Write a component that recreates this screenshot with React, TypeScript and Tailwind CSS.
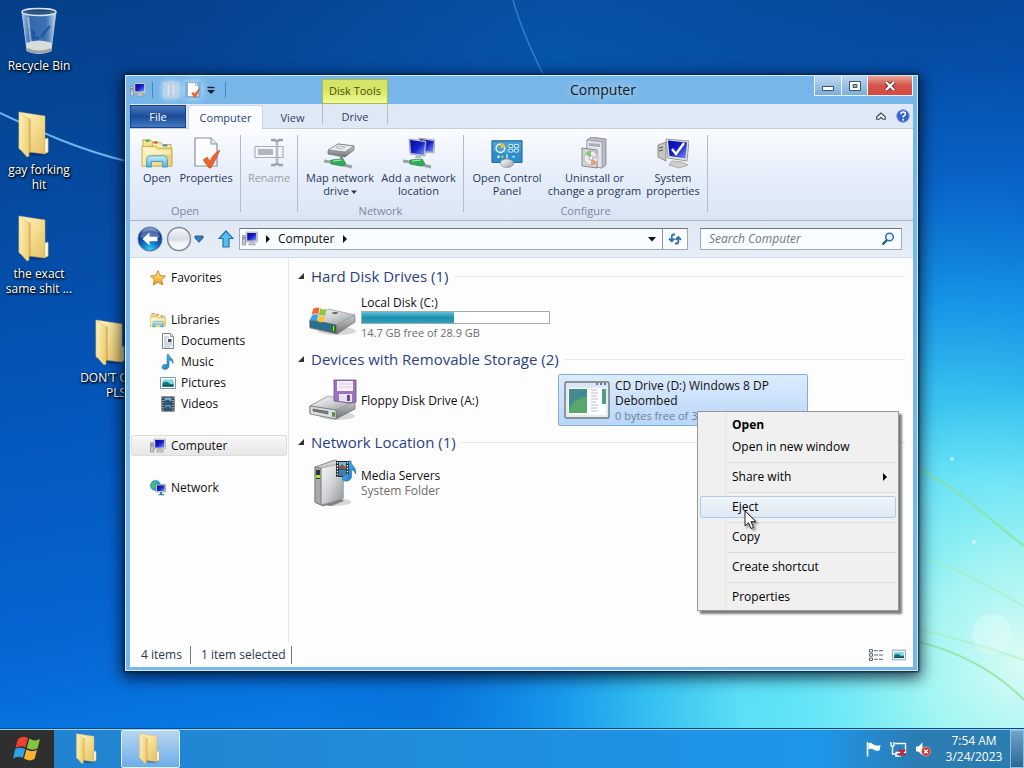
import { useState } from 'react';
import type { ReactNode } from 'react';

interface IconProps { className?: string; }

// Gradients shared by all the icons below.
function Gradients() {
  return (
    <svg className="absolute h-0 w-0" aria-hidden="true">
      <defs>
        <linearGradient id="folderBack" x1="0" y1="0" x2="1" y2="1">
          <stop offset="0" stopColor="#fdf6cf" /><stop offset="0.5" stopColor="#f3dc8c" /><stop offset="1" stopColor="#e3bd62" />
        </linearGradient>
        <linearGradient id="folderFront" x1="0" y1="0" x2="1" y2="0.4">
          <stop offset="0" stopColor="#fdf3c0" /><stop offset="1" stopColor="#f0d27a" />
        </linearGradient>
        <linearGradient id="screen" x1="0" y1="0" x2="1" y2="1">
          <stop offset="0" stopColor="#0505a8" /><stop offset="0.5" stopColor="#1620c8" /><stop offset="1" stopColor="#7f9cf5" />
        </linearGradient>
        <linearGradient id="metal" x1="0" y1="0" x2="1" y2="1">
          <stop offset="0" stopColor="#fafafa" /><stop offset="0.5" stopColor="#d0d2d4" /><stop offset="1" stopColor="#8f9294" />
        </linearGradient>
        <linearGradient id="metalSide" x1="0" y1="0" x2="0" y2="1">
          <stop offset="0" stopColor="#d9dadb" /><stop offset="1" stopColor="#6e7173" />
        </linearGradient>
        <linearGradient id="aqua" x1="0" y1="0" x2="0" y2="1">
          <stop offset="0" stopColor="#c5f0fb" /><stop offset="1" stopColor="#4fb4de" />
        </linearGradient>
        <linearGradient id="note" x1="0" y1="0" x2="1" y2="1">
          <stop offset="0" stopColor="#69cdf5" /><stop offset="1" stopColor="#0a66bb" />
        </linearGradient>
        <radialGradient id="orb" cx="0.5" cy="0.95" r="0.95">
          <stop offset="0" stopColor="#35d3f5" /><stop offset="0.45" stopColor="#0f62bd" /><stop offset="0.8" stopColor="#0b2f86" /><stop offset="1" stopColor="#a9c6ec" />
        </radialGradient>
        <linearGradient id="orbOff" x1="0" y1="0" x2="0" y2="1">
          <stop offset="0" stopColor="#f7f8fb" /><stop offset="0.5" stopColor="#d9dde6" /><stop offset="1" stopColor="#f4f6fa" />
        </linearGradient>
        <linearGradient id="glass" x1="0" y1="0" x2="1" y2="0">
          <stop offset="0" stopColor="#d5e5f5" stopOpacity="0.85" /><stop offset="0.25" stopColor="#4f83c0" stopOpacity="0.6" />
          <stop offset="0.7" stopColor="#5f92cc" stopOpacity="0.6" /><stop offset="1" stopColor="#e5f0fa" stopOpacity="0.9" />
        </linearGradient>
        <linearGradient id="star" x1="0" y1="0" x2="0" y2="1">
          <stop offset="0" stopColor="#fff09a" /><stop offset="1" stopColor="#f49a1c" />
        </linearGradient>
      </defs>
    </svg>
  );
}

function Wallpaper() {
  return (
    <svg className="absolute inset-0 h-full w-full" viewBox="0 0 1024 768" preserveAspectRatio="none" aria-hidden="true">
      <defs>
        <linearGradient id="wpBase" x1="0" y1="0" x2="0.25" y2="1">
          <stop offset="0" stopColor="#053f88" /><stop offset="0.45" stopColor="#0553b4" /><stop offset="0.8" stopColor="#0566d4" /><stop offset="1" stopColor="#0a80ea" />
        </linearGradient>
        <radialGradient id="wpGlow" gradientUnits="userSpaceOnUse" cx="950" cy="690" r="650">
          <stop offset="0" stopColor="#66eef8" /><stop offset="0.32" stopColor="#5cdff6" /><stop offset="0.46" stopColor="#38c4f1" stopOpacity="0.95" />
          <stop offset="0.6" stopColor="#1a9eed" stopOpacity="0.85" /><stop offset="0.8" stopColor="#0a70d4" stopOpacity="0.5" /><stop offset="1" stopColor="#0a64c8" stopOpacity="0" />
        </radialGradient>
        <radialGradient id="wpWhite" gradientUnits="userSpaceOnUse" cx="1030" cy="660" r="270">
          <stop offset="0" stopColor="#eefdf5" stopOpacity="0.9" /><stop offset="0.4" stopColor="#c2fbf0" stopOpacity="0.65" /><stop offset="1" stopColor="#6fe6f8" stopOpacity="0" />
        </radialGradient>
        <radialGradient id="wpTop" gradientUnits="userSpaceOnUse" cx="560" cy="60" r="380">
          <stop offset="0" stopColor="#0a66c4" stopOpacity="0.4" /><stop offset="1" stopColor="#0a66c4" stopOpacity="0" />
        </radialGradient>
      </defs>
      <rect width="1024" height="768" fill="url(#wpBase)" />
      <rect width="1024" height="768" fill="url(#wpTop)" />
      <rect width="1024" height="768" fill="url(#wpGlow)" />
      <rect width="1024" height="768" fill="url(#wpWhite)" />
      <path d="M0 113C40 132 80 150 126 161" fill="none" stroke="#6db5ee" strokeWidth="2" />
      <path d="M513 0C520 25 532 52 544 76" fill="none" stroke="#3f93d6" strokeOpacity="0.7" strokeWidth="1.5" />
      <path d="M918 469C955 485 990 520 1024 546M910 640C960 650 1000 675 1024 700" fill="none" stroke="#8be08c" strokeOpacity="0.7" strokeWidth="2" />
      <path d="M930 560C965 572 995 590 1024 606M915 628C955 638 990 648 1024 660" fill="none" stroke="#a6ecae" strokeOpacity="0.5" strokeWidth="2" />
      <circle cx="992" cy="634" r="20" fill="#fff" fillOpacity="0.25" />
      <circle cx="952" cy="459" r="2" fill="#d9f6ff" fillOpacity="0.7" /><circle cx="974" cy="542" r="2" fill="#e9fbff" fillOpacity="0.7" />
    </svg>
  );
}

function FolderIcon({ className }: IconProps) {
  return (
    <svg viewBox="0 0 32 48" className={className} aria-hidden="true">
      <ellipse cx="20" cy="42" rx="11" ry="3" fill="#000" fillOpacity="0.25" />
      <path d="M2 1L28 5V40L30 41V29L31 28V41L28 43L12 41L2 38Z" fill="url(#folderBack)" stroke="#d3b060" strokeWidth="0.5" />
      <path d="M28 28L31 27V41L28 42Z" fill="#fffbe6" stroke="#cbb878" strokeWidth="0.5" />
      <path d="M2 1L12 8V45L10 46L2 37Z" fill="url(#folderFront)" stroke="#d3b060" strokeWidth="0.5" />
      <path d="M12 8L14 7V41L12 42Z" fill="#c99b3e" fillOpacity="0.5" />
    </svg>
  );
}

function RecycleBinIcon({ className }: IconProps) {
  return (
    <svg viewBox="0 0 40 48" className={className} aria-hidden="true">
      <path d="M3 5L8 44Q20 49 32 44L37 5Z" fill="url(#glass)" stroke="#b9cfe6" strokeWidth="0.8" />
      <path d="M7 36Q20 31 33 36L32 44Q20 49 8 44Z" fill="#e9e8df" fillOpacity="0.9" />
      <path d="M8 41Q20 46 32 41L32 44Q20 49 8 44Z" fill="#8d9499" fillOpacity="0.8" />
      <ellipse cx="20" cy="5" rx="17" ry="3.5" fill="#23476f" fillOpacity="0.75" stroke="#d9e3ee" strokeWidth="1.4" />
      <path d="M10 22L15 26L13 31H20M22 30L31 19M11 27L15 32" stroke="#1551a8" strokeWidth="2.5" fill="none" strokeOpacity="0.8" />
      <path d="M9 10L12 36" stroke="#fff" strokeWidth="2" strokeOpacity="0.45" />
    </svg>
  );
}

function ComputerIcon({ className }: IconProps) {
  return (
    <svg viewBox="0 0 16 16" className={className} aria-hidden="true">
      <path d="M0.5 4.5H3.5V14H0.5Z" fill="#c9ccd2" stroke="#80858f" strokeWidth="0.7" />
      <path d="M1 6.5H3M1 8H3" stroke="#555" strokeWidth="0.6" />
      <path d="M4 1H15.5V11H4Z" fill="#e3e2dc" stroke="#9a9a9a" strokeWidth="0.6" />
      <path d="M5.2 2H14.3V9.6H5.2Z" fill="url(#screen)" />
      <path d="M8 11H12L13.5 14H6.5Z" fill="#c9c9c9" stroke="#888" strokeWidth="0.5" />
    </svg>
  );
}

function SheetCheckIcon({ className }: IconProps) {
  return (
    <svg viewBox="0 0 32 32" className={className} aria-hidden="true">
      <path d="M5 1H21L27 7V29H5Z" fill="#fcfdff" stroke="#8b919b" strokeWidth="1.2" />
      <path d="M21 1V7H27" fill="#e4e8ee" stroke="#8b919b" strokeWidth="1" />
      <path d="M13 23L17 20L20 24C22 19 25 16 30 13C27 20 24 26 21 31H19Z" fill="#ea6435" stroke="#c84d20" strokeWidth="0.6" />
    </svg>
  );
}

function LibraryIcon({ className }: IconProps) {
  return (
    <svg viewBox="0 0 34 32" className={className} aria-hidden="true">
      <path d="M2 2H10L12 4H18V10H2Z" fill="#f6e291" stroke="#b89840" strokeWidth="0.8" />
      <path d="M5 2H9V4H5Z" fill="#34a853" />
      <path d="M12 5H21L23 7H32V13H12Z" fill="#f9eaa5" stroke="#b89840" strokeWidth="0.8" />
      <path d="M14 4H17V6H14Z" fill="#d9453a" /><path d="M23 7H28V9H23Z" fill="#3b8edb" />
      <path d="M1 9H16L18 11H33V30H1Z" fill="url(#folderFront)" stroke="#c29f3f" strokeWidth="0.9" />
      <path d="M3 11H14L16 13H31V17H3Z" fill="#fff9d9" fillOpacity="0.6" />
      <path d="M6 31V23Q6 19 10 19H24Q28 19 28 23V31H23V25H11V31Z" fill="url(#aqua)" stroke="#3c93bd" strokeWidth="0.9" />
    </svg>
  );
}

function RenameIcon({ className }: IconProps) {
  return (
    <svg viewBox="0 0 32 32" className={className} aria-hidden="true">
      <path d="M2 9.5H30V20.5H2Z" fill="#f3f5f9" stroke="#a9aeb9" strokeWidth="1.2" />
      <path d="M5 12H20V18H5Z" fill="#aeb6c6" />
      <path d="M18 3H22L24 5L26 3H30M24 5V26M18 28H22L24 26L26 28H30" fill="none" stroke="#9ba2ae" strokeWidth="2.4" />
      <path d="M24 5V26" stroke="#dfe3ea" strokeWidth="0.8" />
    </svg>
  );
}

function Cable() {
  return (
    <g>
      <path d="M0 24L7 25L28 30" stroke="#9aa2a8" strokeWidth="3" fill="none" />
      <path d="M7 23L19 22L22 27L18 29L7 27Z" fill="#2fae57" stroke="#17793a" strokeWidth="0.6" />
      <path d="M9 24L18 23" stroke="#a6edba" strokeWidth="1" />
    </g>
  );
}

function MapDriveIcon({ className }: IconProps) {
  return (
    <svg viewBox="0 0 32 32" className={className} aria-hidden="true">
      <path d="M4 14L14 7L30 9V13L21 20L4 17Z" fill="url(#metalSide)" stroke="#696c6e" strokeWidth="0.7" />
      <path d="M4 13L14 7L30 9L21 15Z" fill="#e9eaeb" stroke="#777" strokeWidth="0.7" />
      <path d="M12 10.500L16 9L21 10L17 12Z" fill="none" stroke="#999" strokeWidth="0.6" />
      <path d="M17 19L18 23" stroke="#888" strokeWidth="3" />
      <Cable />
    </svg>
  );
}

function AddNetworkIcon({ className }: IconProps) {
  return (
    <svg viewBox="0 0 32 32" className={className} aria-hidden="true">
      <path d="M16 1L32 3L31 16L17 15Z" fill="#e0e2e8" stroke="#8e9199" strokeWidth="0.7" />
      <path d="M17 2L31 4L30 15L18 14Z" fill="url(#screen)" />
      <path d="M6 2L23 4L22 19L7 17Z" fill="#dadce3" stroke="#8e9199" strokeWidth="0.7" />
      <path d="M7 3L22 5L21 18L8 16Z" fill="url(#screen)" />
      <path d="M13 18L18 19V21H12Z" fill="#b5b8bd" />
      <Cable />
    </svg>
  );
}

function ControlPanelIcon({ className }: IconProps) {
  return (
    <svg viewBox="0 0 34 32" className={className} aria-hidden="true">
      <path d="M1 3H33V26H1Z" fill="#2c8fcb" stroke="#1a5f91" strokeWidth="1" />
      <path d="M2 4H32V13Q16 18 2 14Z" fill="#63b6e4" fillOpacity="0.5" />
      <circle cx="10" cy="11" r="4.5" fill="none" stroke="#fff" strokeWidth="1.4" />
      <path d="M10 11V5A5.5 5.5 0 0 1 15 10Z" fill="#f6bb35" />
      <path d="M19 7H23V10H19ZM25 7H29V10H25ZM19 12H23V15H19ZM25 12H29V15H25Z" fill="#2a78ad" stroke="#d7effc" strokeWidth="1" />
      <circle cx="8" cy="20" r="1.3" fill="#fff" /><circle cx="12" cy="20" r="1.3" fill="#f6bb35" /><circle cx="24" cy="20" r="1.3" fill="#a6dcf7" />
      <ellipse cx="17" cy="27" rx="7" ry="4.5" fill="url(#metal)" stroke="#888" strokeWidth="0.6" />
      <path d="M17 22V17" stroke="#c7e2f2" strokeWidth="1.5" />
    </svg>
  );
}

function UninstallIcon({ className }: IconProps) {
  return (
    <svg viewBox="0 0 32 32" className={className} aria-hidden="true">
      <path d="M8 3L12 0L27 2V28L23 31L8 28Z" fill="#b9bac6" stroke="#787a86" strokeWidth="0.7" />
      <path d="M8 3L23 5V31L8 28Z" fill="#e3e3ea" stroke="#85879a" strokeWidth="0.6" />
      <path d="M10 6L21 7V10L10 9Z" fill="#a9abc2" />
      <path d="M3 11L18 13V31L3 29Z" fill="#d5d6d4" stroke="#707270" strokeWidth="0.8" />
      <circle cx="12" cy="21" r="7" fill="#e9eef0" stroke="#9aa5a5" strokeWidth="0.7" />
      <path d="M12 21L6 17A7 7 0 0 1 12 14Z" fill="#86c97b" /><path d="M12 21L18 25A7 7 0 0 1 12 28Z" fill="#e8a16d" /><path d="M12 21L18 17L19 22Z" fill="#d5c2ec" />
      <circle cx="12" cy="21" r="2" fill="#fff" stroke="#888" strokeWidth="0.6" />
    </svg>
  );
}

function SystemIcon({ className }: IconProps) {
  return (
    <svg viewBox="0 0 32 32" className={className} aria-hidden="true">
      <path d="M1 8L9 5V24L1 20Z" fill="#c5c6c0" stroke="#7b7c76" strokeWidth="0.8" />
      <path d="M2 11L6 10M2 14L6 13" stroke="#545450" strokeWidth="1" />
      <path d="M9 2L32 4L30 24L11 21Z" fill="#e5e5e0" stroke="#86867f" strokeWidth="0.8" />
      <path d="M11 3.5L30 5.5L28.5 21.5L12.5 19Z" fill="url(#screen)" />
      <path d="M15 24L25 25L31 28L22 31L12 28Z" fill="#cfcfcb" stroke="#8b8b86" strokeWidth="0.6" />
      <path d="M15 12L19 17L27 6" fill="none" stroke="#fff" strokeWidth="2.4" />
    </svg>
  );
}

function StarIcon({ className }: IconProps) {
  return (
    <svg viewBox="0 0 16 16" className={className} aria-hidden="true">
      <path d="M8 0.7L10.2 5.6L15.5 6.1L11.5 9.6L12.7 14.9L8 12.1L3.3 14.9L4.5 9.6L0.5 6.1L5.8 5.6Z" fill="url(#star)" stroke="#c9761b" strokeWidth="0.9" />
    </svg>
  );
}

function DocumentIcon({ className }: IconProps) {
  return (
    <svg viewBox="0 0 16 16" className={className} aria-hidden="true">
      <path d="M2.5 0.5H10.5L13.5 3.5V15.5H2.5Z" fill="#fdfdfd" stroke="#7c828a" />
      <path d="M10.5 0.5V3.5H13.5" fill="none" stroke="#7c828a" strokeWidth="0.8" />
      <path d="M4 4H9M4 6H7M4 8H7M4 10H12M4 12H12M4 14H10" stroke="#8fa0b3" strokeWidth="0.8" />
      <path d="M8 6H11.500V9H8Z" fill="#41566e" />
    </svg>
  );
}

function MusicIcon({ className }: IconProps) {
  return (
    <svg viewBox="0 0 16 16" className={className} aria-hidden="true">
      <path d="M7 0.5H9C9 3.5 14 4.5 13 9.5C12.6 7 10.5 6.2 9 6V12C9 14.5 6.5 15.6 4.4 15.4C2.2 15.2 1.2 13.5 2.4 11.8C3.4 10.4 5.5 10 7 10.7Z" fill="url(#note)" stroke="#1b6fae" strokeWidth="0.5" />
    </svg>
  );
}

function PictureIcon({ className }: IconProps) {
  return (
    <svg viewBox="0 0 16 16" className={className} aria-hidden="true">
      <path d="M0.5 2.5H15.5V13.5H0.5Z" fill="#fdfefe" stroke="#7998b4" />
      <path d="M2.5 4.5H13.5V11.5H2.5Z" fill="#7fd6e6" />
      <path d="M2.5 8Q6 5.5 9 8T13.5 8V11.5H2.5Z" fill="#17786f" />
      <path d="M2.5 10H13.5V11.5H2.5Z" fill="#0f4b63" />
    </svg>
  );
}

function VideoIcon({ className }: IconProps) {
  return (
    <svg viewBox="0 0 16 16" className={className} aria-hidden="true">
      <path d="M1.5 0.5H14.5V15.5H1.5Z" fill="#23282e" />
      <path d="M4.5 1.5H11.5V7.3H4.5Z" fill="#6fb6df" /><path d="M4.5 8.5H11.5V14.5H4.5Z" fill="#4c92c7" />
      <path d="M4.5 5L8 3.5L11.5 6V7.3H4.5Z" fill="#2d5470" /><path d="M4.5 12L8 10.5L11.5 13V14.5H4.5Z" fill="#2d5470" />
      <path d="M3 1.5V15M13 1.5V15" stroke="#f4f4f4" strokeWidth="1.2" strokeDasharray="1.3 1.1" />
    </svg>
  );
}

function NetworkIcon({ className }: IconProps) {
  return (
    <svg viewBox="0 0 16 16" className={className} aria-hidden="true">
      <circle cx="5.5" cy="5.5" r="5" fill="#2b9ed8" stroke="#186b9b" strokeWidth="0.5" />
      <path d="M2 3Q4 0.8 6.5 1.5L5 4L6 6L3.5 9Q1 7 1 5Z" fill="#3fbf69" />
      <path d="M6 4.5H15.5V12H6Z" fill="#d6dbe4" stroke="#737a86" strokeWidth="0.5" />
      <path d="M7 5.4H14.6V11H7Z" fill="url(#screen)" />
      <path d="M10 12H12V14H14V15.2H8.5V14H10Z" fill="#3f7cb8" />
    </svg>
  );
}

function WindowsFlag({ className }: IconProps) {
  return (
    <svg viewBox="0 0 28 26" className={className} aria-hidden="true">
      <path d="M5 3Q10 -1 15 2L12.5 11.5Q8 9 2.5 12Z" fill="#ef4030" />
      <path d="M16.3 2.6Q21 6 27 3L24.5 12.5Q19 15 13.8 12Z" fill="#85c43c" />
      <path d="M2.2 13.3Q7 10.5 12.2 13L9.8 22Q5 19.5 0 22.5Z" fill="#2ba3e6" />
      <path d="M13.4 13.6Q18.5 16.5 24 14L21.5 23Q16 26 11 22.6Z" fill="#fbb52c" />
    </svg>
  );
}

function HardDiskIcon({ className }: IconProps) {
  return (
    <svg viewBox="0 0 48 40" className={className} aria-hidden="true">
      <ellipse cx="28" cy="34" rx="19" ry="4" fill="#000" fillOpacity="0.15" />
      <path d="M1 23L18 15L46 19V25L28 37L1 31Z" fill="url(#metalSide)" stroke="#6f7375" strokeWidth="0.7" />
      <path d="M1 22L20 12L46 18L27 28Z" fill="url(#metal)" stroke="#919496" strokeWidth="0.7" />
      <path d="M1 23L27 28V36L1 30Z" fill="#27708f" stroke="#48606b" strokeWidth="0.7" />
      <path d="M22 28L27 29V35L22 34Z" fill="#2e6b2c" /><path d="M24.500 29V34" stroke="#a8e04b" strokeWidth="1.2" />
      <ellipse cx="26" cy="16" rx="3" ry="1.1" fill="#444" fillOpacity="0.8" />
      <path d="M4 12Q7 9.500 10.500 11L9.300 17Q6 15.500 2.800 17.600Z" fill="#ee6a34" />
      <path d="M11.200 11.300Q14 13.500 17.500 12L16.200 18Q12.500 19.500 10 17.300Z" fill="#8dc63f" />
      <path d="M2.600 18.500Q6 16.300 9.100 17.900L7.800 24Q4.800 22.300 1.400 24.300Z" fill="#3ba3e0" />
      <path d="M9.800 18.200Q12.500 20.200 16 18.800L14.700 24.800Q11.500 26 8.600 24.200Z" fill="#fcc62f" />
    </svg>
  );
}

function FloppyDriveIcon({ className }: IconProps) {
  return (
    <svg viewBox="0 0 48 44" className={className} aria-hidden="true">
      <ellipse cx="28" cy="38" rx="18" ry="4" fill="#000" fillOpacity="0.15" />
      <path d="M1 28L18 19L46 23V31L27 41L1 35Z" fill="url(#metalSide)" stroke="#6f7375" strokeWidth="0.8" />
      <path d="M1 28L19 18L46 23L27 32Z" fill="url(#metal)" stroke="#919496" strokeWidth="0.7" />
      <path d="M1 28L27 32V41L1 36Z" fill="#dcdedf" stroke="#707476" strokeWidth="0.8" />
      <path d="M4 31L19 33.500V36L4 33Z" fill="#777c7f" stroke="#4a4e50" strokeWidth="0.6" />
      <path d="M23 34L26 34.600V39L23 38.400Z" fill="#5a8f32" />
      <path d="M25 2H47V24L42 25L25 23Z" fill="#9b76bd" stroke="#6d4794" strokeWidth="0.8" />
      <path d="M28 3H44V13H28Z" fill="#f5f1f9" /><path d="M30 6H42M30 9H42" stroke="#cfc2dc" strokeWidth="0.8" />
      <path d="M30 16H43V24H38L30 23Z" fill="#e9e3ef" /><path d="M38 17H41V23H38Z" fill="#6d4794" />
    </svg>
  );
}

function CdDriveIcon({ className }: IconProps) {
  return (
    <svg viewBox="0 0 46 40" className={className} aria-hidden="true">
      <rect x="1" y="2" width="44" height="36" rx="1.500" fill="#e7eaec" stroke="#6c7780" strokeWidth="1.400" />
      <path d="M2 3H44V7H2Z" fill="#d7e6f3" />
      <path d="M32 4H34M36 4H38M40 4H42" stroke="#3a5875" strokeWidth="1.600" />
      <path d="M4 8H42V35H4Z" fill="#fdfefe" />
      <path d="M5 9H23V33H5Z" fill="#468b8e" />
      <path d="M5 33V25Q12 15 23 16V33Z" fill="#57a96b" /><path d="M5 22Q13 10 23 10V17Q12 18 5 29Z" fill="#3f8798" fillOpacity="0.6" />
      <path d="M27 10H33M27 13H34M27 16H33M27 19H34M27 22H32M27 25H34M27 28H33M27 31H34" stroke="#b9c0c6" strokeWidth="1" />
      <path d="M38 9H42V24H38Z" fill="#4f9b86" />
    </svg>
  );
}

function MediaServerIcon({ className }: IconProps) {
  return (
    <svg viewBox="0 0 48 48" className={className} aria-hidden="true">
      <ellipse cx="24" cy="43" rx="18" ry="4" fill="#000" fillOpacity="0.15" />
      <path d="M6 8L26 1L34 5V39L14 47L6 43Z" fill="url(#metalSide)" stroke="#6f7375" strokeWidth="0.8" />
      <path d="M12 9L34 4V40L12 46Z" fill="url(#metal)" stroke="#9a9d9f" strokeWidth="0.8" />
      <path d="M6 8L12 9V46L6 43Z" fill="#a7aaac" stroke="#66696b" strokeWidth="0.600" />
      <path d="M7 11H11V20H7Z" fill="#2f3332" /><path d="M7 16H11V19H7Z" fill="#b2e035" />
      <path d="M16 46L32 40L35 42L22 47Z" fill="#7c8082" />
      <path d="M27 2H40V18H27Z" fill="#22282e" /><path d="M30 3H37V9.500H30Z" fill="#6fb6df" /><path d="M30 10.500H37V17H30Z" fill="#3f7fb0" />
      <path d="M30 8L33 5L37 8.500V9.500H30Z" fill="#9a4f30" />
      <path d="M28.500 3V18M38.500 3V18" stroke="#f4f4f4" strokeWidth="1.400" strokeDasharray="1.500 1.400" />
      <path d="M40 2H42C42 7 48 8 46.500 15C45.500 11.500 44 11 42.500 11V17C42.500 21 39 22.500 36 22C33 21.500 32.500 18 35 16.500C37 15.300 39 15.500 40 16Z" fill="url(#note)" stroke="#1b6fae" strokeWidth="0.600" />
    </svg>
  );
}

function Caret({ className }: IconProps) {
  return <svg viewBox="0 0 8 8" className={className} aria-hidden="true"><path d="M0 2H8L4 6.500Z" fill="currentColor" /></svg>;
}

function Arrow({ className }: IconProps) {
  return <svg viewBox="0 0 8 8" className={className} aria-hidden="true"><path d="M2 0L6 4L2 8Z" fill="currentColor" /></svg>;
}

interface DesktopItemProps { label: string; icon: ReactNode; place: string; }

function DesktopItem({ label, icon, place }: DesktopItemProps) {
  return (
    <button className={`absolute flex w-[74px] flex-col items-center gap-[3px] text-center text-xs leading-[15px] text-white [text-shadow:1px_1px_2px_#000,0_1px_3px_#000] ${place}`}>
      {icon}
      <span>{label}</span>
    </button>
  );
}

interface RibbonButtonProps { label: ReactNode; icon: ReactNode; width: string; disabled?: boolean; }

function RibbonButton({ label, icon, width, disabled }: RibbonButtonProps) {
  return (
    <button disabled={disabled} className={`flex shrink-0 flex-col items-center gap-0.5 text-center leading-[13px] whitespace-nowrap ${width} ${disabled ? 'text-[#9a9ea8]' : 'text-[#26395c]'}`}>
      {icon}
      <span>{label}</span>
    </button>
  );
}

function RibbonGroup({ name, className, children }: { name?: string; className: string; children: ReactNode }) {
  return (
    <div className="flex shrink-0">
      <div className={`flex flex-col justify-between ${className}`}>
        <div className="flex pt-0.5">{children}</div>
        <div className="h-4 text-center leading-4 text-[#7c879b]">{name}</div>
      </div>
      <span className="h-[77px] w-px bg-[#b3bccb]" />
    </div>
  );
}

function Ribbon() {
  const size = 'h-8 w-8';
  return (
    <div className="flex h-[92px] shrink-0 items-stretch border-b border-[#a9b4c4] bg-linear-to-b from-[#fafcff] via-[#e7eefa] to-[#dae5f4] pt-1.5 pb-px text-[11px]">
      <RibbonGroup name="Open" className="px-1.5">
        <RibbonButton width="w-[42px]" label="Open" icon={<LibraryIcon className={size} />} />
        <RibbonButton width="w-14" label="Properties" icon={<SheetCheckIcon className={size} />} />
      </RibbonGroup>
      <RibbonGroup className="px-0.5">
        <RibbonButton width="w-[52px]" label="Rename" disabled icon={<RenameIcon className={size} />} />
      </RibbonGroup>
      <RibbonGroup name="Network" className="px-1">
        <RibbonButton width="w-[76px]" icon={<MapDriveIcon className={size} />}
          label={<>Map network<br />drive<Caret className="ml-0.5 inline h-1.5 w-1.5" /></>} />
        <RibbonButton width="w-[81px]" label={<>Add a network<br />location</>} icon={<AddNetworkIcon className={size} />} />
      </RibbonGroup>
      <RibbonGroup name="Configure" className="px-1">
        <RibbonButton width="w-[78px]" label={<>Open Control<br />Panel</>} icon={<ControlPanelIcon className={size} />} />
        <RibbonButton width="w-[97px]" label={<>Uninstall or<br />change a program</>} icon={<UninstallIcon className={size} />} />
        <RibbonButton width="w-[60px]" label={<>System<br />properties</>} icon={<SystemIcon className={size} />} />
      </RibbonGroup>
    </div>
  );
}

function TitleBar() {
  return (
    <div className="flex h-7 shrink-0 text-[11px]">
      <div className="flex w-48 shrink-0 items-center">
        <ComputerIcon className="h-4 w-4" />
        <span className="ml-1.5 h-4 w-px bg-[#4d87ba]" />
        <button aria-label="New folder" className="ml-2.5 h-4 w-4 bg-[#b7d4ea] shadow-[0_0_6px_#d7ebfa]">
          <svg viewBox="0 0 16 16" aria-hidden="true"><path d="M4 2H7V14H4ZM9 2H12V14H9Z" fill="#dde6ee" stroke="#b9cddd" /></svg>
        </button>
        <button aria-label="Properties" className="ml-1.5 shadow-[0_0_8px_#d7ebfa]"><SheetCheckIcon className="h-4 w-4" /></button>
        <button aria-label="Customize Quick Access Toolbar" className="ml-1.5">
          <svg viewBox="0 0 8 10" className="h-2.5 w-2" aria-hidden="true"><path d="M0.500 2.500H7.500" stroke="#16202c" strokeWidth="1.400" /><path d="M0 5H8L4 9Z" fill="#16202c" /></svg>
        </button>
        <span className="ml-2.5 h-4 w-px bg-[#4d87ba]" />
      </div>
      <div className="mt-[3px] flex w-[66px] shrink-0 items-center justify-center border border-[#a9bd4a] bg-linear-to-b from-[#d4e268] via-[#dbe75f] to-[#f4fa9e] whitespace-nowrap text-[#454f22]">Disk Tools</div>
      <h1 className="flex-1 pl-1 text-center text-sm leading-7 text-[#101820] [text-shadow:0_0_8px_#e6f4ff]">Computer</h1>
      <div className="flex h-5 shrink-0 border border-t-0 border-[#eaf5fd]">
        <button aria-label="Minimize" className="flex w-[27px] items-center justify-center border-r border-[#eaf5fd] bg-linear-to-b from-[#bcd9ef] to-[#79addb]">
          <svg viewBox="0 0 12 5" className="mt-1.5 h-[5px] w-3" aria-hidden="true"><path d="M0.500 0.500H11.500V4.500H0.500Z" fill="#fff" stroke="#3f5365" /></svg>
        </button>
        <button aria-label="Maximize" className="flex w-[26px] items-center justify-center border-r border-[#eaf5fd] bg-linear-to-b from-[#bcd9ef] to-[#79addb]">
          <svg viewBox="0 0 12 10" className="h-2.5 w-3" aria-hidden="true"><path d="M0.500 0.500H11.500V9.500H0.500Z" fill="#fff" stroke="#3f5365" /><path d="M4 3.500H8V6.500H4Z" fill="#8fb9dc" stroke="#3f5365" /></svg>
        </button>
        <button aria-label="Close" className="flex w-11 items-center justify-center bg-linear-to-b from-[#e8a399] via-[#d3544a] to-[#d9473d]">
          <svg viewBox="0 0 12 10" className="h-2.5 w-3" aria-hidden="true"><path d="M2 1L10 9M10 1L2 9" stroke="#5b3030" strokeWidth="4" /><path d="M2 1L10 9M10 1L2 9" stroke="#fff" strokeWidth="2.400" /></svg>
        </button>
      </div>
    </div>
  );
}

function TabRow() {
  return (
    <div className="flex h-[25px] shrink-0 items-end border-b border-[#c3cedd] bg-[#dfe8f5] text-[11px] text-[#33415e]">
      <button className="h-[23px] w-14 border border-[#1d3f83] bg-linear-to-b from-[#4a79bf] via-[#1d4a97] to-[#3f7cc6] pt-0.5 text-white">File</button>
      <button className="-mb-px ml-0.5 h-6 w-[75px] rounded-t-sm border border-b-0 border-[#cad5e3] bg-[#fafcff] pt-0.5 text-[#27447f]">Computer</button>
      <button className="h-6 w-[59px] pt-1">View</button>
      <button className="mb-1 h-5 w-[66px] border-x border-[#b5c2a8] pt-1.5">Drive</button>
      <div className="ml-auto flex h-6 items-center gap-2.5 pr-[3px]">
        <button aria-label="Minimize the Ribbon">
          <svg viewBox="0 0 10 8" className="h-2 w-2.5" aria-hidden="true"><path d="M0.700 5L5 1L9.300 5V7.300H7L5 5.300L3 7.300H0.700Z" fill="#fff" stroke="#333f50" strokeWidth="1.100" /></svg>
        </button>
        <button aria-label="Help">
          <svg viewBox="0 0 14 14" className="h-3.5 w-3.5" aria-hidden="true">
            <circle cx="7" cy="7" r="6.300" fill="#345fd0" stroke="#8ea3cc" />
            <path d="M4.800 5.200Q5 3 7.200 3T9.400 5Q9.400 6.300 7.200 7.400V8.600" fill="none" stroke="#fff" strokeWidth="1.500" /><circle cx="7.200" cy="10.700" r="1" fill="#fff" />
          </svg>
        </button>
      </div>
    </div>
  );
}

function AddressRow() {
  return (
    <div className="flex h-[37px] shrink-0 items-center border-b border-[#cfdbe9] bg-linear-to-b from-[#dfe8f3] to-[#e6eef8] pr-[11px] pl-[7px]">
      <button aria-label="Back">
        <svg viewBox="0 0 26 26" className="h-[26px] w-[26px]" aria-hidden="true">
          <circle cx="13" cy="13" r="12" fill="url(#orb)" stroke="#5b6f92" strokeWidth="1" />
          <path d="M3 11Q5 3 13 3T23 11Q13 14 3 11Z" fill="#fff" fillOpacity="0.280" />
          <path d="M5.500 13L12.500 6.500V10.800H20.500V15.200H12.500V19.500Z" fill="#fff" />
        </svg>
      </button>
      <button aria-label="Forward" className="ml-[3px]">
        <svg viewBox="0 0 26 26" className="h-[26px] w-[26px]" aria-hidden="true">
          <circle cx="13" cy="13" r="11.500" fill="url(#orbOff)" stroke="#7f8794" strokeWidth="1.400" />
          <path d="M3 14Q13 17 23 14Q22 22 13 23Q4 22 3 14Z" fill="#fff" fillOpacity="0.500" />
        </svg>
      </button>
      <button aria-label="Recent pages" className="ml-0.5">
        <svg viewBox="0 0 10 8" className="h-2 w-2.5" aria-hidden="true"><path d="M1 1H9V3L5 7.300L1 3Z" fill="#2a80c4" stroke="#1d4f85" strokeWidth="0.900" /></svg>
      </button>
      <button aria-label="Up" className="ml-3.5">
        <svg viewBox="0 0 16 18" className="h-[18px] w-4" aria-hidden="true"><path d="M8 1L15 8.500H11V17H5V8.500H1Z" fill="#58bdee" stroke="#2370a8" strokeWidth="1.200" /></svg>
      </button>
      <div className="ml-[5px] flex h-[22px] min-w-0 flex-1 items-center border border-[#a0aab6] border-t-[#6d7580] bg-[#f9fcff] pl-0.5">
        <ComputerIcon className="h-4 w-4 shrink-0" />
        <Arrow className="ml-1.5 h-2 w-2" />
        <button className="mx-1.5">Computer</button>
        <Arrow className="h-2 w-2" />
        <button aria-label="Previous locations" className="mr-1.5 ml-auto"><Caret className="h-2 w-2" /></button>
        <button aria-label="Refresh" className="flex h-full w-[25px] items-center justify-center border-l border-[#8a939f]">
          <svg viewBox="0 0 14 12" className="h-3 w-3.5" fill="none" stroke="#2f6dab" strokeWidth="1.800" aria-hidden="true">
            <path d="M7 1.500H5.500Q3.800 1.500 3.800 3.500V8M1 5.500L3.800 8.300L6.500 5.500" /><path d="M7 10.500H8.500Q10.300 10.500 10.300 8.500V5M7.500 6.800L10.300 4L13 6.800" />
          </svg>
        </button>
      </div>
      <div className="ml-3 flex h-[22px] w-[202px] items-center border border-[#a0aab6] border-t-[#6d7580] bg-[#f9fcff] pr-1.5">
        <input type="text" aria-label="Search Computer" placeholder="Search Computer" className="min-w-0 flex-1 bg-transparent pl-2 outline-none placeholder:text-[#72777f] placeholder:italic" />
        <svg viewBox="0 0 14 14" className="h-3.5 w-3.5" aria-hidden="true"><path d="M1.500 12.500L6 8" stroke="#255a93" strokeWidth="2.400" /><circle cx="8.500" cy="5" r="3.800" fill="#e3f4ff" stroke="#346fa9" strokeWidth="1.500" /></svg>
      </div>
    </div>
  );
}

interface TreeEntry { name: string; icon: ReactNode; nested?: boolean; gap?: boolean; }

const TREE: TreeEntry[] = [
  { name: 'Favorites', icon: <StarIcon className="h-4 w-4" /> },
  { name: 'Libraries', icon: <LibraryIcon className="h-4 w-4" />, gap: true },
  { name: 'Documents', icon: <DocumentIcon className="h-4 w-4" />, nested: true },
  { name: 'Music', icon: <MusicIcon className="h-4 w-4" />, nested: true },
  { name: 'Pictures', icon: <PictureIcon className="h-4 w-4" />, nested: true },
  { name: 'Videos', icon: <VideoIcon className="h-4 w-4" />, nested: true },
  { name: 'Computer', icon: <ComputerIcon className="h-4 w-4" />, gap: true },
  { name: 'Network', icon: <NetworkIcon className="h-4 w-4" />, gap: true },
];

function NavTree() {
  const [selected, setSelected] = useState('Computer');
  return (
    <nav className="flex w-[159px] shrink-0 flex-col border-r border-[#dfe8f2] px-px pt-[9px]">
      {TREE.map(t => (
        <button key={t.name} onClick={() => setSelected(t.name)}
          className={`flex h-[21px] shrink-0 items-center gap-[5px] rounded-xs border ${t.nested ? 'pl-7' : 'pl-[18px]'} ${t.gap ? 'mt-[21px]' : ''} ${t.name === selected ? 'border-[#dcdcdc] bg-linear-to-b from-[#f8f8f8] to-[#e7e7e7]' : 'border-transparent'}`}>
          {t.icon}
          <span>{t.name}</span>
        </button>
      ))}
    </nav>
  );
}

function DriveSection({ title, children }: { title: string; children: ReactNode }) {
  return (
    <section className="mb-[5px]">
      <div className="mb-1 flex h-[22px] items-center">
        <svg viewBox="0 0 8 8" className="mr-1.5 h-2 w-2" aria-hidden="true"><path d="M7 1V7H1Z" fill="#333" /></svg>
        <h2 className="text-[15px] whitespace-nowrap text-[#2b3f86]">{title}</h2>
        <span className="ml-1.5 h-px flex-1 bg-[#e3e6ee]" />
      </div>
      <div className="flex pl-[7px]">{children}</div>
    </section>
  );
}

function DriveTile({ icon, selected, children }: { icon: ReactNode; selected?: boolean; children: ReactNode }) {
  return (
    <button className={`mr-1 flex h-[52px] w-[250px] items-center gap-1 rounded-xs border pl-1 text-left ${selected ? 'border-[#84acdd] bg-linear-to-b from-[#dcebfc] to-[#b9d6fb]' : 'border-transparent'}`}>
      {icon}
      <span className="flex-1 leading-[15px]">{children}</span>
    </button>
  );
}

const DISK = { total: 28.9, free: 14.7 };

function DriveList() {
  const used = ((DISK.total - DISK.free) / DISK.total) * 100;
  return (
    <main className="min-w-0 flex-1 px-2 pt-[7px]">
      <DriveSection title="Hard Disk Drives (1)">
        <DriveTile icon={<HardDiskIcon className="h-10 w-12 shrink-0" />}>
          <span className="block">Local Disk (C:)</span>
          <span className="my-px flex h-[13px] w-[189px] border border-[#a9a9a9] bg-white">
            <span className="bg-linear-to-b from-[#5cc4dc] via-[#1c8fae] to-[#2ba2c0]" style={{ width: `${used}%` }} />
          </span>
          <span className="block text-[11px] text-[#6d6d6d]">{DISK.free} GB free of {DISK.total} GB</span>
        </DriveTile>
      </DriveSection>
      <DriveSection title="Devices with Removable Storage (2)">
        <DriveTile icon={<FloppyDriveIcon className="h-11 w-12 shrink-0" />}>Floppy Disk Drive (A:)</DriveTile>
        <DriveTile selected icon={<CdDriveIcon className="h-10 w-12 shrink-0" />}>
          <span className="block">CD Drive (D:) Windows 8 DP<br />Debombed</span>
          <span className="block text-[11px] text-[#6f7f99]">0 bytes free of 3.58 GB</span>
        </DriveTile>
      </DriveSection>
      <DriveSection title="Network Location (1)">
        <DriveTile icon={<MediaServerIcon className="h-12 w-12 shrink-0" />}>
          Media Servers
          <span className="block text-[#6d6d6d]">System Folder</span>
        </DriveTile>
      </DriveSection>
    </main>
  );
}

function StatusBar() {
  return (
    <div className="flex h-6 shrink-0 items-center bg-[#fdfdfe] pr-[7px] pl-[11px] text-[#2c3850]">
      <span className="w-[49px]">4 items</span>
      <span className="h-[18px] w-px bg-[#6d7888]" />
      <span className="w-[100px] pl-2.5">1 item selected</span>
      <span className="h-[18px] w-px bg-[#6d7888]" />
      <button aria-label="Details view" className="ml-auto">
        <svg viewBox="0 0 16 14" className="h-3.5 w-4" fill="none" stroke="#5c6470" aria-hidden="true">
          <path d="M1.500 1.500H4.500V4H1.500ZM1.500 5.700H4.500V8.200H1.500ZM1.500 10H4.500V12.500H1.500Z" /><path d="M6 2.700H15M6 7H15M6 11.300H15" strokeDasharray="4 1" />
        </svg>
      </button>
      <button aria-label="Large icons" className="ml-2">
        <PictureIcon className="h-3.5 w-3.5" />
      </button>
    </div>
  );
}

function ExplorerWindow() {
  return (
    <div className="absolute top-[75px] right-[106px] bottom-[58px] left-[125px] flex flex-col border border-[#d3ebfb] bg-[#77b6e8] px-1 pb-[3px] text-xs text-[#111] shadow-[0_0_2px_1px_#08203c,0_4px_14px_3px_rgba(0,10,30,0.75)]">
      <TitleBar />
      <TabRow />
      <Ribbon />
      <AddressRow />
      <div className="flex min-h-0 flex-1 bg-[#fdfdfe]">
        <NavTree />
        <DriveList />
      </div>
      <StatusBar />
    </div>
  );
}

const MENU = ['Open', 'Open in new window', '-', 'Share with', '-', 'Eject', '-', 'Copy', '-', 'Create shortcut', '-', 'Properties'];

function ContextMenu() {
  return (
    <div role="menu" className="absolute top-[411px] left-[697px] w-[202px] border border-[#979797] bg-[#f0f0f0] bg-linear-to-r from-[#f0f0f0] from-[27px] via-[#e2e3e3] via-[28px] to-[#f0f0f0] to-[29px] p-0.5 text-xs text-black shadow-[3px_3px_2px_rgba(0,0,0,0.5)]">
      {MENU.map((m, i) => m === '-' ? (
        <div key={i} role="separator" className="flex h-2 items-center pl-7"><span className="h-px flex-1 bg-[#dcdcdc]" /></div>
      ) : (
        <button key={i} role="menuitem"
          className={`flex h-[22px] w-full items-center justify-between rounded-xs border pr-1.5 pl-[31px] ${m === 'Eject' ? 'border-[#afcbea] bg-linear-to-b from-[#eff4fa] to-[#dfe9f5]' : 'border-transparent'} ${m === 'Open' ? 'font-bold' : ''}`}>
          {m}
          {m === 'Share with' && <Arrow className="h-2 w-2" />}
        </button>
      ))}
    </div>
  );
}

function Cursor() {
  return (
    <svg viewBox="0 0 14 20" className="pointer-events-none absolute top-[510px] left-[744px] h-5 w-3.5 drop-shadow-[2px_2px_1px_rgba(0,0,0,0.4)]" aria-hidden="true">
      <path d="M1 1V16L4.500 12.700L7 18.500L9.500 17.300L7 11.700H12Z" fill="#fff" stroke="#222" strokeWidth="1" />
    </svg>
  );
}

function Taskbar() {
  return (
    <footer className="relative flex h-[39px] shrink-0 items-stretch border-t border-[#9cd0f3] bg-linear-to-r from-[#2282cd] via-[#1e96ea] via-80% to-[#2b7cb0] to-90% text-xs text-white shadow-[0_-1px_0_#0b4c88]">
      <button aria-label="Start" className="flex w-[54px] items-center justify-center bg-[#2f2f30]"><WindowsFlag className="h-[26px] w-7" /></button>
      <button aria-label="File Explorer" className="ml-[3px] flex w-[58px] items-center justify-center"><FolderIcon className="h-8 w-6" /></button>
      <button aria-label="Computer" className="ml-1.5 flex w-[59px] items-center justify-center rounded-xs border border-[#dff1fd] bg-linear-to-b from-[#b8d5ee] to-[#6cadea] pr-1"><FolderIcon className="h-8 w-6" /></button>
      <div className="ml-auto flex items-center gap-2">
        <button aria-label="Action Center">
          <svg viewBox="0 0 16 16" className="h-4 w-4" aria-hidden="true"><path d="M2.500 1V15.500" stroke="#fff" strokeWidth="1.600" /><path d="M3.500 2Q6 1 8.500 3.500Q11 5.500 15.500 4L14.500 9.500Q11 10.500 8.500 8.500Q6 7 3.500 8.500Z" fill="#fff" /></svg>
        </button>
        <button aria-label="Network">
          <svg viewBox="0 0 18 16" className="h-4 w-[18px]" aria-hidden="true">
            <path d="M6 2.500H16.500V11.500H6.500M2 1V4Q2 5.500 3.500 5.500T5 4V1M3.500 5.500V13H8M6 15H12" fill="none" stroke="#fff" strokeWidth="1.400" />
            <path d="M10 8.500L16 14.500M16 8.500L10 14.500" stroke="#d31f35" strokeWidth="2.400" />
          </svg>
        </button>
        <button aria-label="Volume muted">
          <svg viewBox="0 0 16 16" className="h-4 w-4" aria-hidden="true">
            <path d="M1 5.500H3.500L7.500 1.500V14.500L3.500 10.500H1Z" fill="#fff" /><circle cx="11" cy="10.500" r="4.600" fill="#d8342c" stroke="#f3d1cd" strokeWidth="0.500" />
            <path d="M9.200 8.700L12.800 12.300M12.800 8.700L9.200 12.300" stroke="#fff" strokeWidth="1.500" />
          </svg>
        </button>
        <button className="ml-1 w-[62px] text-center leading-4">7:54 AM<br />3/24/2023</button>
      </div>
      <button aria-label="Show desktop" className="ml-[5px] w-3.5 border border-[#8fc0e0] bg-linear-to-b from-[#6fa5c9] to-[#2a6794]" />
    </footer>
  );
}

export default function App() {
  return (
    <div className="relative flex h-screen flex-col overflow-hidden font-['Open_Sans','Noto_Sans',sans-serif]">
      <Gradients />
      <Wallpaper />
      <div className="relative flex-1">
        <DesktopItem label="Recycle Bin" place="top-[7px] left-[2px]" icon={<RecycleBinIcon className="h-12 w-10" />} />
        <DesktopItem label="gay forking hit" place="top-[111px] left-[2px]" icon={<FolderIcon className="mr-3 h-12 w-8" />} />
        <DesktopItem label="the exact same shit ..." place="top-[215px] left-[2px]" icon={<FolderIcon className="mr-3 h-12 w-8" />} />
        <DesktopItem label="DON'T OPEN PLS" place="top-[319px] left-[79px]" icon={<FolderIcon className="mr-3 h-12 w-8" />} />
        <ExplorerWindow />
        <ContextMenu />
        <Cursor />
      </div>
      <Taskbar />
    </div>
  );
}
